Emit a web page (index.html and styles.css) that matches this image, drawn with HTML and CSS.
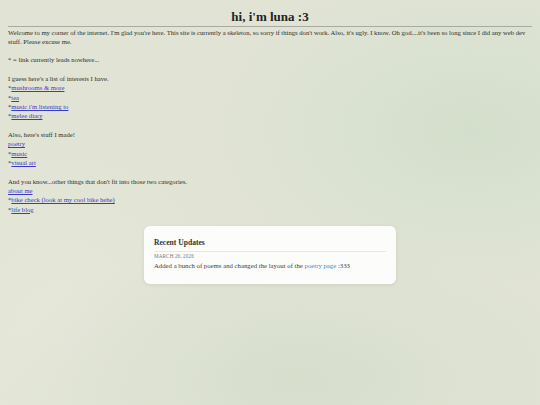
FILE: index.html
```html
<!DOCTYPE html>
<html>
<head>
<meta charset="utf-8">
<link rel="stylesheet" href="styles.css">
</head>
<body>
<main class="page">
  <h1 class="title">hi, i'm luna :3</h1>
  <hr class="rule">
  <div class="content">
    <p>Welcome to my corner of the internet. I'm glad you're here. This site is currently a skeleton, so sorry if things don't work. Also, it's ugly. I know. Oh god....it's been so long since I did any web dev stuff. Please excuse me.</p>
    <p>* = link currently leads nowhere...</p>
    <p>I guess here's a list of interests I have.<br>
    *<a href="#">mushrooms &amp; more</a><br>
    *<a href="#">tea</a><br>
    *<a href="#">music i'm listening to</a><br>
    *<a href="#">melee diary</a></p>
    <p>Also, here's stuff I made!<br>
    <a href="#">poetry</a><br>
    *<a href="#">music</a><br>
    *<a href="#">visual art</a></p>
    <p>And you know...other things that don't fit into those two categories.<br>
    <a href="#">about me</a><br>
    *<a href="#">bike check (look at my cool bike hehe)</a><br>
    *<a href="#">life blog</a></p>
  </div>
  <section class="card">
    <h2 class="card-title">Recent Updates</h2>
    <div class="entry">
      <div class="entry-date">March 26, 2026</div>
      <div class="entry-text">Added a bunch of poems and changed the layout of the <a class="card-link" href="#">poetry page</a> :333</div>
    </div>
  </section>
</main>
</body>
</html>
```

FILE: styles.css
```css
html, body {
  margin: 0;
  height: 100%;
}
body {
  background-color: #e1e4d5;
  background-image:
    radial-gradient(ellipse 260px 160px at 470px 130px, rgba(200, 218, 196, 0.55), rgba(200, 218, 196, 0) 100%),
    radial-gradient(ellipse 300px 140px at 300px 380px, rgba(205, 216, 196, 0.5), rgba(205, 216, 196, 0) 100%),
    radial-gradient(ellipse 200px 200px at 60px 330px, rgba(232, 233, 220, 0.6), rgba(232, 233, 220, 0) 100%);
  font-family: "Liberation Serif", "Times New Roman", serif;
  color: #2e2e2a;
}
.page {
  padding: 0 8px;
}
.title {
  margin: 0;
  padding-top: 8px;
  font-size: 13px;
  line-height: 17px;
  text-align: center;
  font-weight: bold;
  color: #232321;
}
.rule {
  margin: 1px 0 0;
  border: 0;
  border-top: 1px solid #a9aaa3;
  height: 0;
}
.content {
  font-size: 6.65px;
  line-height: 9.33px;
  padding-top: 0.5px;
}
.content p {
  margin: 0 0 9.33px;
}
.content a {
  color: #3a3acb;
}
.card {
  width: 232px;
  margin: 12px auto 0;
  padding: 10px 10px 13px;
  background: rgba(255, 255, 255, 0.9);
  border-radius: 6px;
  box-shadow: 0 1px 4px rgba(0, 0, 0, 0.08);
}
.card-title {
  margin: 0;
  font-size: 7.6px;
  line-height: 14px;
  font-weight: bold;
  color: #2f3336;
  border-bottom: 1px solid #e6e8e6;
  padding-bottom: 1px;
}
.entry {
  padding-top: 1px;
}
.entry-date {
  font-size: 5.2px;
  line-height: 7px;
  text-transform: uppercase;
  color: #777a7c;
  letter-spacing: 0.1px;
}
.entry-text {
  font-size: 6.75px;
  line-height: 11px;
  color: #3b3e40;
}
.card-link {
  color: #3a88c8;
  text-decoration: none;
}
```
